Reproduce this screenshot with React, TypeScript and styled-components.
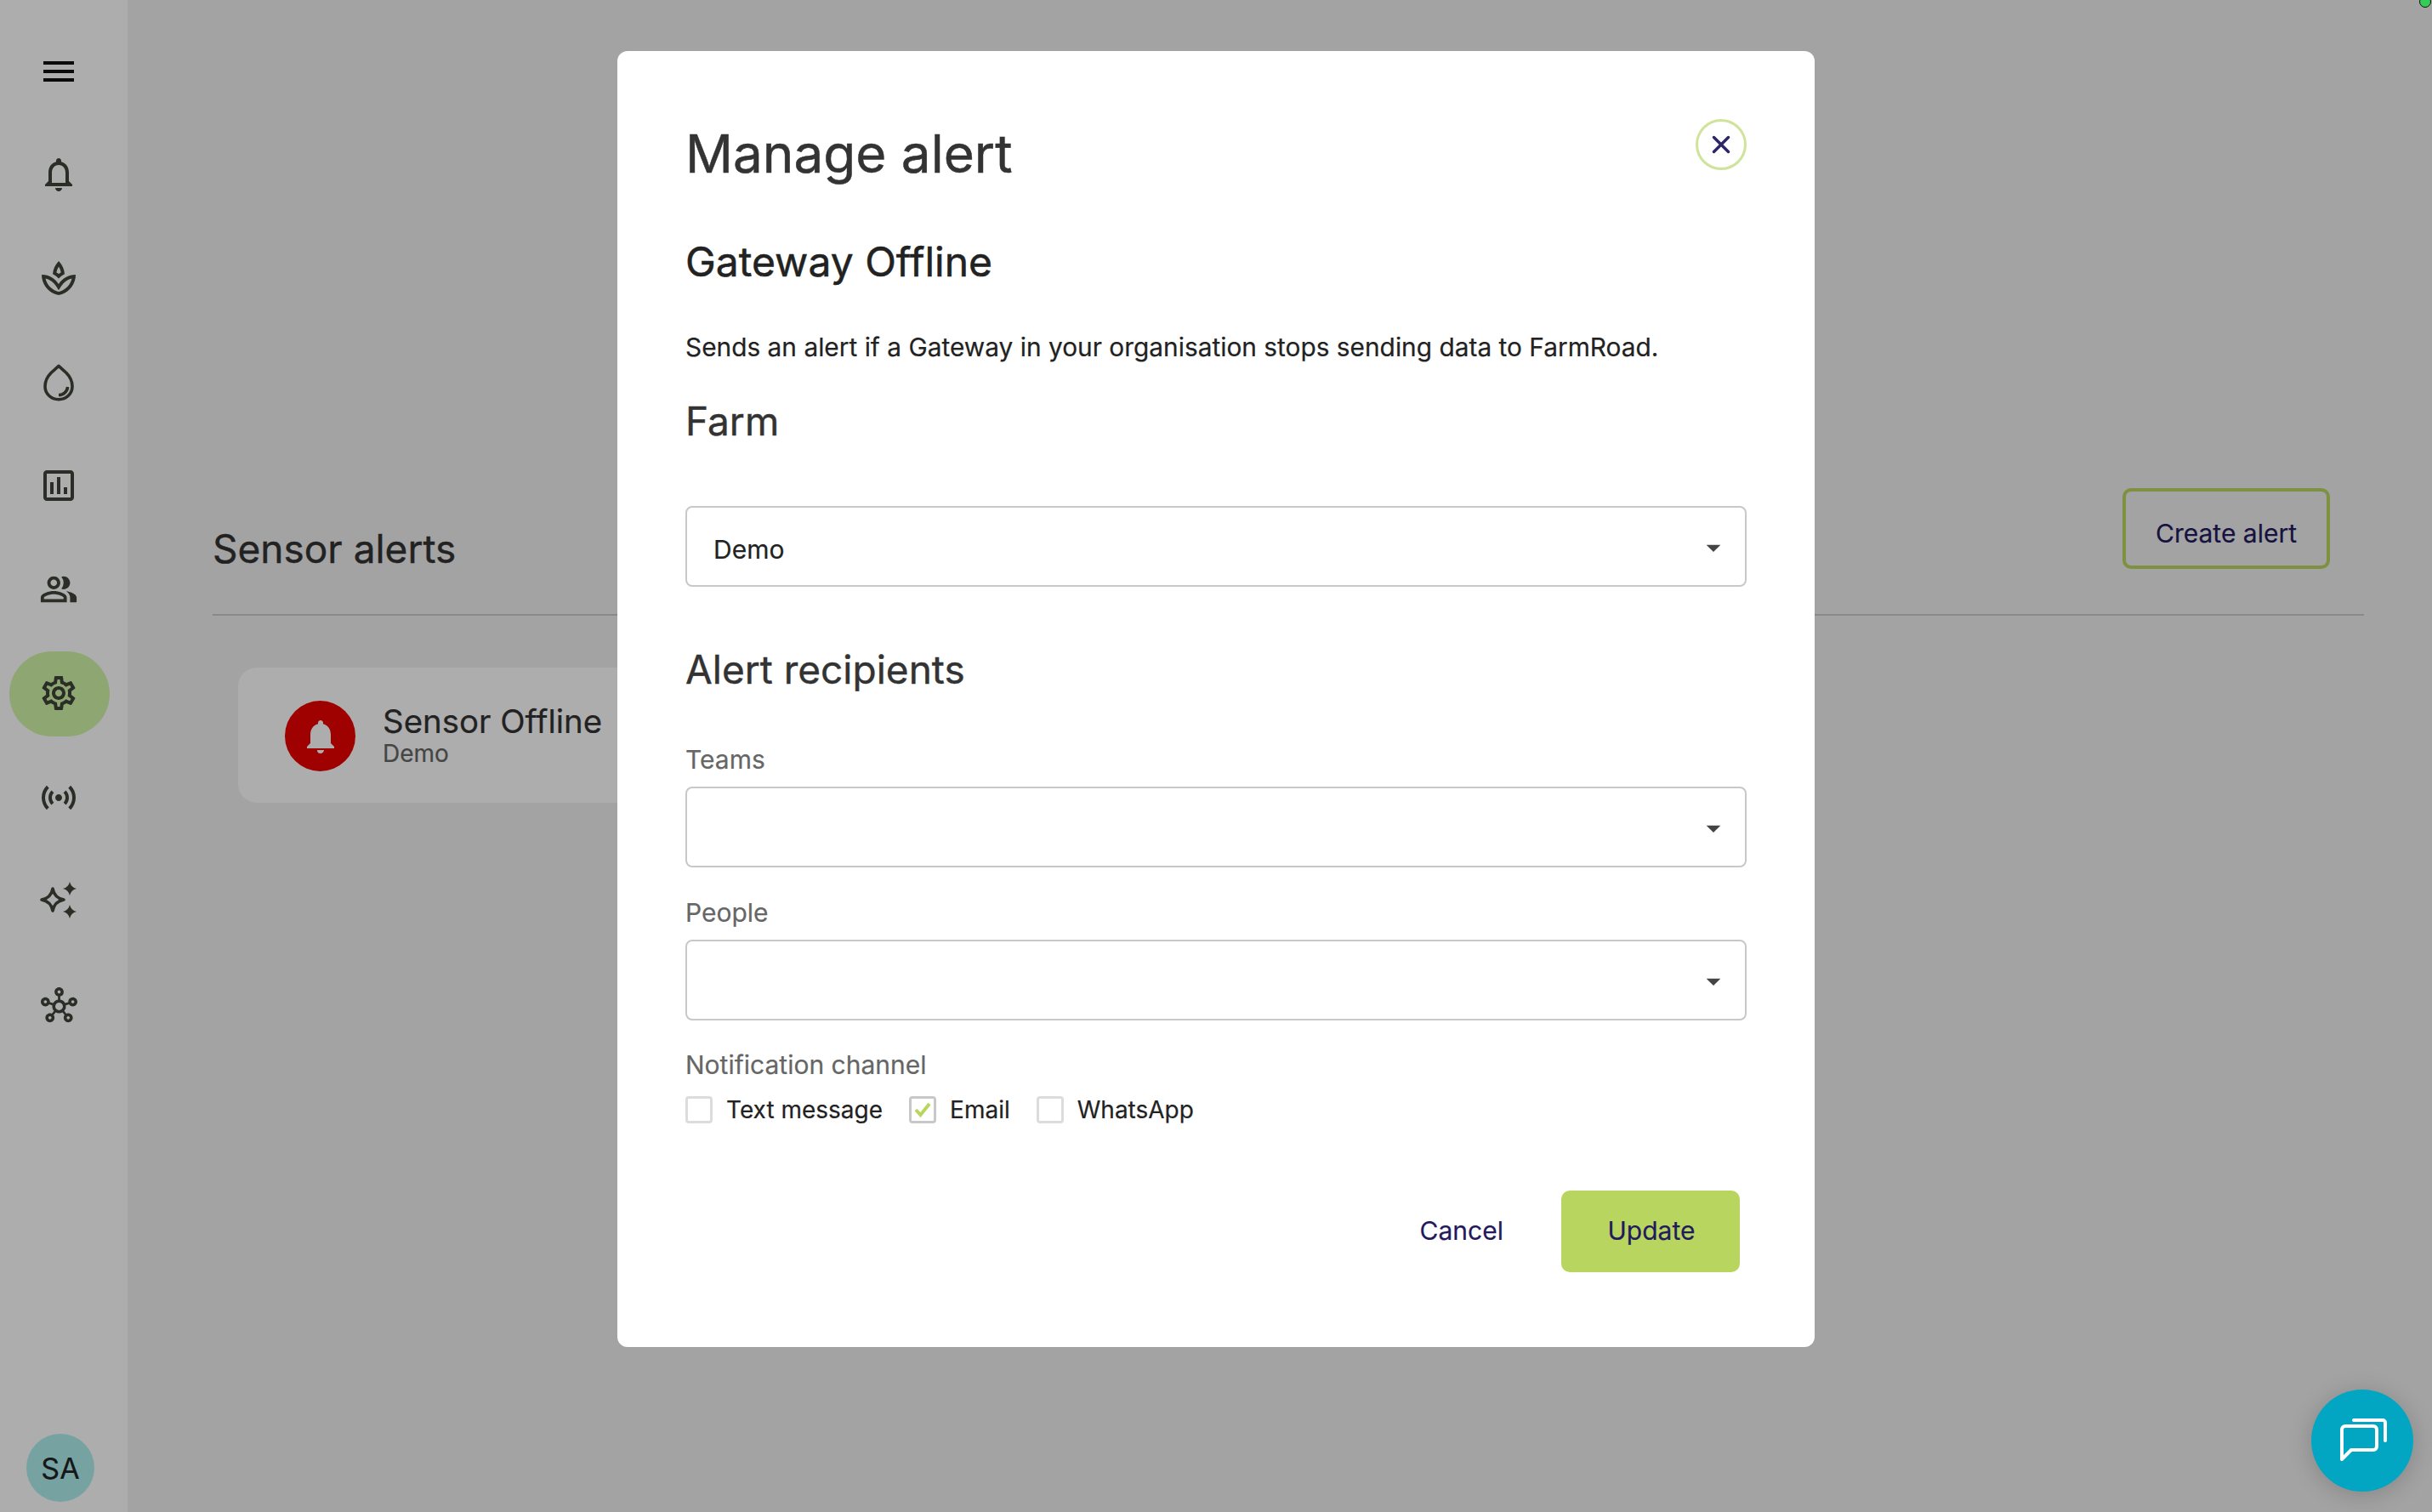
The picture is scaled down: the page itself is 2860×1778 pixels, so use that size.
import React from 'react';
import styled, { createGlobalStyle } from 'styled-components';
import {
  MdMenu,
  MdOutlineNotifications,
  MdOutlineSpa,
  MdOutlineAssessment,
  MdOutlinePeopleAlt,
  MdOutlineSettings,
  MdOutlineSensors,
  MdOutlineHub,
  MdNotifications,
  MdArrowDropDown,
} from 'react-icons/md';

const GlobalStyle = createGlobalStyle`
  html, body {
    margin: 0;
    padding: 0;
    height: 100%;
  }
  body {
    font-family: Inter, "Liberation Sans", sans-serif;
    -webkit-text-stroke: 0.2px;
  }
  * {
    box-sizing: border-box;
  }
`;

const Page = styled.div`
  display: flex;
  width: 2860px;
  height: 1778px;
  overflow: hidden;
  background-color: #f0f0f0;
`;

const Sidebar = styled.nav`
  display: flex;
  flex-direction: column;
  gap: 22px;
  flex: 0 0 150px;
  padding: 34px 0 12px 11px;
  background-color: #fff;
`;

const NavItem = styled.div<{ $active?: boolean; $lift?: boolean }>`
  display: flex;
  align-items: center;
  justify-content: center;
  flex: 0 0 100px;
  width: 118px;
  padding: 0 2px ${props => (props.$lift ? '3px' : '0')} 0;
  border-radius: 50px;
  color: #3e4539;
  background-color: ${props => (props.$active ? '#d2f5a8' : 'transparent')};
`;

const MenuItem = styled(NavItem)`
  color: #111;
`;

const Avatar = styled.div`
  display: flex;
  align-items: center;
  justify-content: center;
  width: 80px;
  height: 80px;
  margin: auto 0 0 20px;
  border-radius: 50%;
  background-color: #aef0ef;
  color: #222;
  font-size: 34px;
`;

const Main = styled.main`
  flex: 1;
  padding: 574px 80px 0 100px;
`;

const HeaderRow = styled.header`
  display: flex;
  justify-content: space-between;
  align-items: flex-start;
  height: 150px;
  padding-right: 40px;
  border-bottom: 2px solid #cbcbcb;
`;

const PageTitle = styled.h2`
  margin: 43px 0 0;
  font-size: 46px;
  line-height: 56px;
  font-weight: 400;
  -webkit-text-stroke: 0.4px;
  color: #333;
`;

const CreateButton = styled.button`
  width: 244px;
  height: 95px;
  padding: 10px 0 0;
  border: 4px solid #b8d65f;
  border-radius: 10px;
  background: transparent;
  color: #231a5e;
  font-family: inherit;
  font-size: 30px;
`;

const AlertCard = styled.div`
  display: flex;
  align-items: center;
  gap: 32px;
  width: 560px;
  height: 159px;
  margin: 61px 0 0 30px;
  padding-left: 55px;
  border-radius: 22px;
  background-color: #fff;
`;

const AlertBadge = styled.div`
  display: flex;
  align-items: center;
  justify-content: center;
  width: 83px;
  height: 83px;
  margin-top: 2px;
  border-radius: 50%;
  background-color: #ea0000;
  color: #fff;
`;

const AlertText = styled.div`
  padding-bottom: 3px;
`;

const AlertName = styled.div`
  font-size: 38.4px;
  line-height: 44px;
  color: #333;
`;

const AlertFarm = styled.div`
  margin-top: 1px;
  font-size: 28px;
  line-height: 30px;
  color: #666;
`;

const Backdrop = styled.div`
  position: fixed;
  inset: 0;
  display: flex;
  justify-content: center;
  align-items: flex-start;
  padding-top: 60px;
  background-color: rgba(0, 0, 0, 0.32);
`;

const Modal = styled.section`
  position: relative;
  width: 1408px;
  padding: 84px 80px 88px;
  border-radius: 12px;
  background-color: #fff;
`;

const CloseButton = styled.button`
  position: absolute;
  top: 80px;
  right: 80px;
  display: flex;
  align-items: center;
  justify-content: center;
  width: 60px;
  height: 60px;
  padding: 0;
  border: 3px solid #cfe49a;
  border-radius: 50%;
  background: #fff;
  color: #2c2566;
`;

const ModalTitle = styled.h1`
  margin: 0;
  font-size: 62px;
  line-height: 74px;
  font-weight: 400;
  -webkit-text-stroke: 0.5px;
  color: #333;
`;

const AlertType = styled.h2`
  margin: 61px 0 0;
  font-size: 48px;
  line-height: 58px;
  font-weight: 400;
  -webkit-text-stroke: 0.5px;
  color: #222;
`;

const Description = styled.p`
  margin: 53px 0 0;
  font-size: 29.85px;
  line-height: 36px;
  color: #222;
`;

const SectionTitle = styled.h3<{ $top: number }>`
  margin: ${props => props.$top}px 0 0;
  font-size: 46px;
  line-height: 56px;
  font-weight: 400;
  -webkit-text-stroke: 0.4px;
  color: #333;
`;

const FieldLabel = styled.label<{ $top: number }>`
  display: block;
  margin-top: ${props => props.$top}px;
  font-size: 30px;
  line-height: 36px;
  color: #666;
`;

const SelectBox = styled.div<{ $top: number }>`
  display: flex;
  align-items: center;
  justify-content: space-between;
  height: 95px;
  margin-top: ${props => props.$top}px;
  padding: 2px 17px 0 31px;
  border: 2px solid #c8c8c8;
  border-radius: 8px;
  color: #444;
`;

const SelectValue = styled.span`
  padding-top: 4px;
  font-size: 30px;
  color: #222;
`;

const ChannelRow = styled.div`
  display: flex;
  gap: 31px;
  margin-top: 17px;
`;

const Channel = styled.div`
  display: flex;
  align-items: center;
  gap: 16px;
  font-size: 28px;
  line-height: 36px;
  color: #222;
`;

const CheckBox = styled.span<{ $checked?: boolean }>`
  display: flex;
  align-items: center;
  justify-content: center;
  width: 32px;
  height: 32px;
  border: 3px solid ${props => (props.$checked ? '#c8c8c8' : '#dcdcdc')};
  border-radius: 4px;
`;

const Actions = styled.div`
  display: flex;
  justify-content: flex-end;
  align-items: center;
  gap: 68px;
  margin-top: 77px;
  padding-right: 8px;
`;

const CancelButton = styled.button`
  padding: 0 0 2px;
  border: 0;
  background: transparent;
  color: #231a5e;
  font-family: inherit;
  font-size: 30px;
`;

const UpdateButton = styled.button`
  width: 210px;
  height: 96px;
  padding: 0 0 2px 2px;
  border: 0;
  border-radius: 10px;
  background-color: #b8d65f;
  color: #231a5e;
  font-family: inherit;
  font-size: 30px;
`;

const ChatButton = styled.button`
  position: fixed;
  right: 22px;
  bottom: 24px;
  display: flex;
  align-items: center;
  justify-content: center;
  width: 120px;
  height: 120px;
  padding: 0;
  border: 0;
  border-radius: 50%;
  background-color: #02a6c2;
  box-shadow: 0 4px 28px rgba(0, 0, 0, 0.18);
`;

const StatusDot = styled.span`
  position: fixed;
  top: -5px;
  right: 1px;
  width: 14px;
  height: 14px;
  border: 1px solid #111;
  border-radius: 50%;
  background-color: #33cc55;
`;

const DropIcon = () => (
  <svg width="48" height="48" viewBox="0 0 48 48" fill="none" stroke="currentColor" strokeWidth="3.6">
    <path
      d="M24 5.3 L33 13.5 C38 18.5 40 24.5 40 29.5 C40 38 33 44.7 24 44.7 C15 44.7 8 38 8 29.5 C8 24.5 10 18.5 15 13.5 Z"
      strokeLinejoin="round"
    />
    <path d="M24 39.5 C29.5 39.5 34 35.5 34.6 30" />
  </svg>
);

const SparkleIcon = () => (
  <svg width="48" height="48" viewBox="0 0 48 48" fill="none">
    <path
      d="M17 9 Q19 20 30 22 Q19 24 17 35 Q15 24 4 22 Q15 20 17 9 Z"
      stroke="currentColor"
      strokeWidth="3.6"
      strokeLinejoin="round"
    />
    <path d="M37 1 Q38.5 7.5 45 9 Q38.5 10.5 37 17 Q35.5 10.5 29 9 Q35.5 7.5 37 1 Z" fill="currentColor" />
    <path d="M37 28 Q38.5 34.5 45 36 Q38.5 37.5 37 44 Q35.5 37.5 29 36 Q35.5 34.5 37 28 Z" fill="currentColor" />
  </svg>
);

const ChatIcon = () => (
  <svg width="64" height="64" viewBox="0 0 64 64" fill="none" stroke="#fff" strokeWidth="4" strokeLinecap="round" strokeLinejoin="round">
    <path d="M8 54 V19 a4 4 0 0 1 4-4 H45 a4 4 0 0 1 4 4 V39 a4 4 0 0 1-4 4 H19 L8 54 Z" />
    <path d="M22 8 H56 a3 3 0 0 1 3 3 V32" />
  </svg>
);

const CheckIcon = () => (
  <svg width="22" height="18" viewBox="0 0 22 18" fill="none">
    <path d="M3 9 L8.5 15 L19 2" stroke="#b8d65f" strokeWidth="4" />
  </svg>
);

const CloseIcon = () => (
  <svg width="22" height="22" viewBox="0 0 22 22" fill="none" stroke="currentColor" strokeWidth="3.4" strokeLinecap="round">
    <path d="M2.5 2.5 L19.5 19.5 M19.5 2.5 L2.5 19.5" />
  </svg>
);

const navIcons = [
  <MdOutlineNotifications size={48} />,
  <MdOutlineSpa size={48} />,
  <DropIcon />,
  <MdOutlineAssessment size={48} />,
  <MdOutlinePeopleAlt size={46} />,
  <MdOutlineSettings size={48} />,
  <MdOutlineSensors size={48} />,
  <SparkleIcon />,
  <MdOutlineHub size={43} />,
];

const ACTIVE_NAV = 5;

const Select: React.FC<{ top: number; value?: string }> = ({ top, value }) => (
  <SelectBox $top={top}>
    <SelectValue>{value}</SelectValue>
    <MdArrowDropDown size={40} />
  </SelectBox>
);

const App: React.FC = () => {
  return (
    <>
      <GlobalStyle />
      <Page>
        <Sidebar>
          <MenuItem>
            <MdMenu size={48} />
          </MenuItem>
          {navIcons.map((icon, i) => (
            <NavItem key={i} $active={i === ACTIVE_NAV} $lift={i <= ACTIVE_NAV}>
              {icon}
            </NavItem>
          ))}
          <Avatar>SA</Avatar>
        </Sidebar>
        <Main>
          <HeaderRow>
            <PageTitle>Sensor alerts</PageTitle>
            <CreateButton>Create alert</CreateButton>
          </HeaderRow>
          <AlertCard>
            <AlertBadge>
              <MdNotifications size={48} />
            </AlertBadge>
            <AlertText>
              <AlertName>Sensor Offline</AlertName>
              <AlertFarm>Demo</AlertFarm>
            </AlertText>
          </AlertCard>
        </Main>
      </Page>
      <Backdrop>
        <Modal>
          <CloseButton>
            <CloseIcon />
          </CloseButton>
          <ModalTitle>Manage alert</ModalTitle>
          <AlertType>Gateway Offline</AlertType>
          <Description>Sends an alert if a Gateway in your organisation stops sending data to FarmRoad.</Description>
          <SectionTitle $top={41}>Farm</SectionTitle>
          <Select top={72} value="Demo" />
          <SectionTitle $top={69}>Alert recipients</SectionTitle>
          <FieldLabel $top={60}>Teams</FieldLabel>
          <Select top={14} />
          <FieldLabel $top={35}>People</FieldLabel>
          <Select top={14} />
          <FieldLabel $top={34}>Notification channel</FieldLabel>
          <ChannelRow>
            <Channel>
              <CheckBox />
              Text message
            </Channel>
            <Channel>
              <CheckBox $checked>
                <CheckIcon />
              </CheckBox>
              Email
            </Channel>
            <Channel>
              <CheckBox />
              WhatsApp
            </Channel>
          </ChannelRow>
          <Actions>
            <CancelButton>Cancel</CancelButton>
            <UpdateButton>Update</UpdateButton>
          </Actions>
        </Modal>
      </Backdrop>
      <ChatButton>
        <ChatIcon />
      </ChatButton>
      <StatusDot />
    </>
  );
};

export default App;
